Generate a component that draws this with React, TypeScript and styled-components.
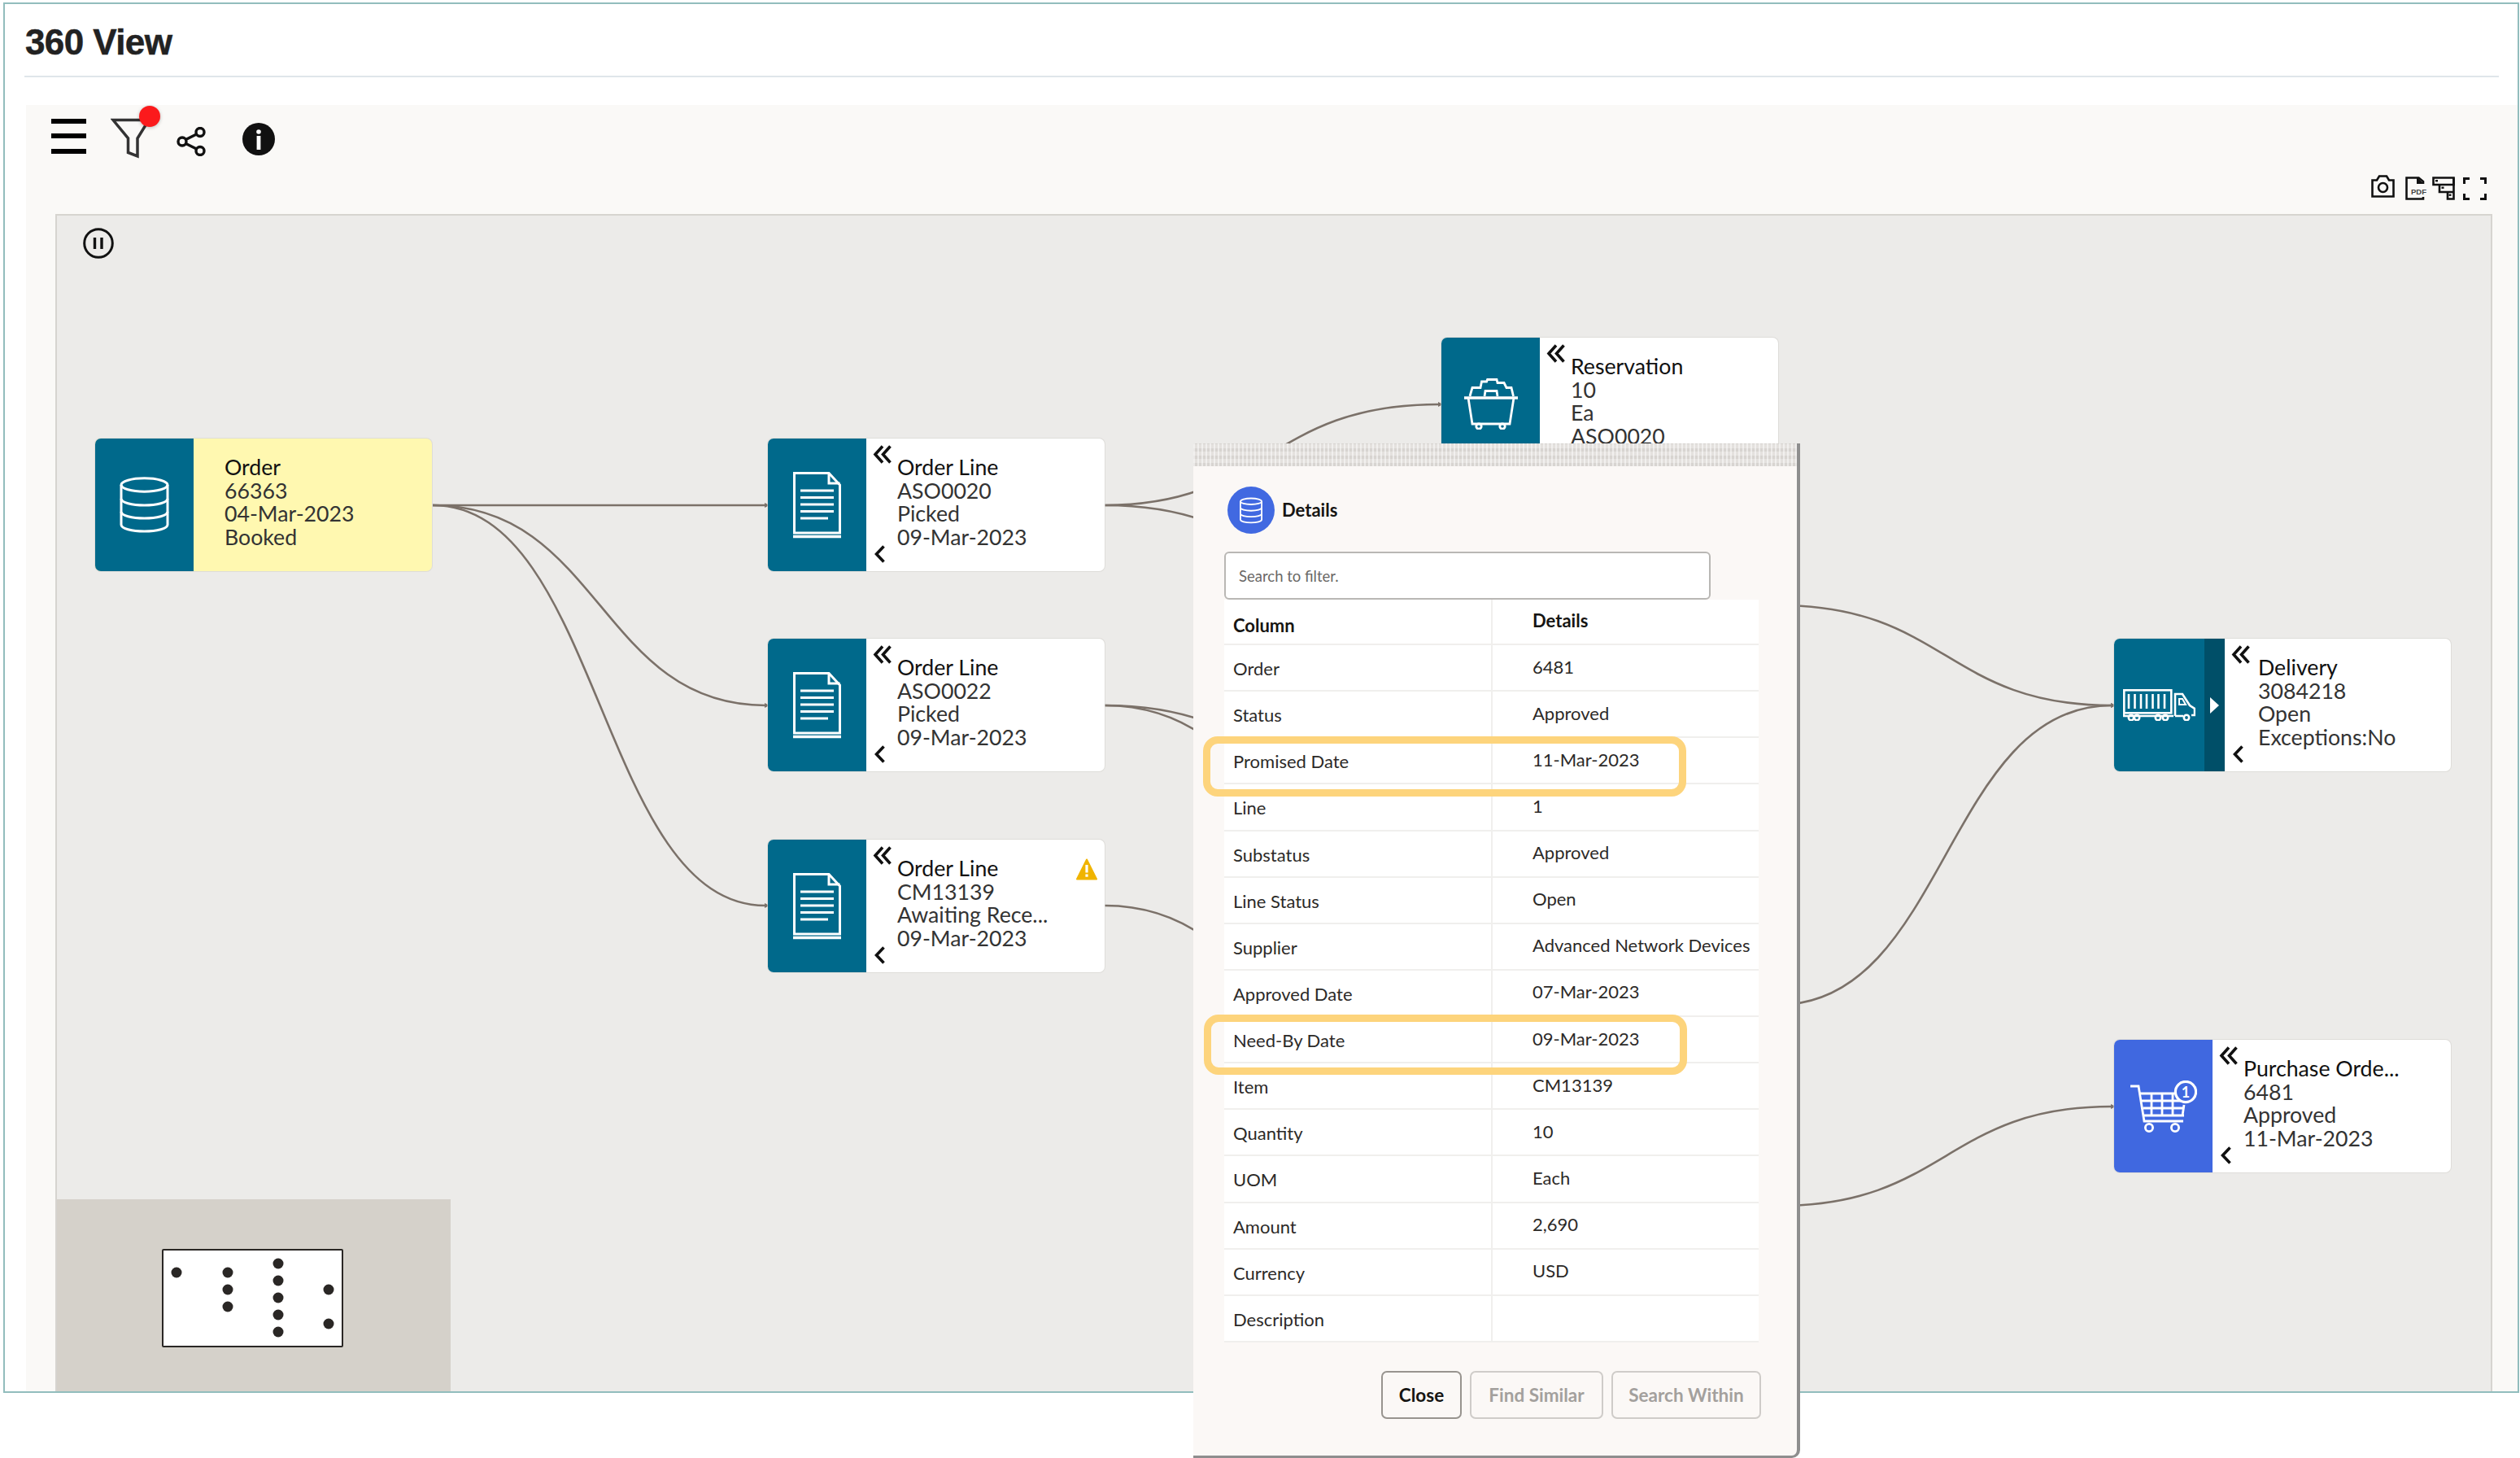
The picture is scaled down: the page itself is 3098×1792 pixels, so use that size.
import React from 'react';
import styled, { createGlobalStyle } from 'styled-components';

const GlobalStyle = createGlobalStyle`
  html, body {
    margin: 0;
    background: #fff;
  }
  * {
    box-sizing: border-box;
  }
`;

const Page = styled.div`
  position: relative;
  width: 3098px;
  height: 1792px;
  padding: 3px 0 0 4px;
  overflow: hidden;
  font-family: Lato, 'Noto Sans', sans-serif;
`;

const Frame = styled.div`
  width: 3093px;
  height: 1709px;
  border: 2px solid #92bdbd;
  display: flex;
  flex-direction: column;
`;

const TitleBar = styled.div`
  height: 90px;
  margin: 0 23px 0 24px;
  padding: 6px 0 0 1px;
  display: flex;
  align-items: center;
  border-bottom: 2px solid #dfe6ea;
`;

const Title = styled.h1`
  margin: 0;
  font-family: 'Liberation Sans', Arial, sans-serif;
  font-size: 44px;
  font-weight: 700;
  letter-spacing: -0.6px;
  color: #222;
  -webkit-text-stroke: 0.5px #222;
`;

const Panel = styled.div`
  flex: 1;
  margin: 34px 0 0 26px;
  background: #faf9f7;
  display: flex;
  flex-direction: column;
  min-height: 0;
`;

const Toolbar = styled.div`
  height: 134px;
  flex: none;
  display: flex;
  justify-content: space-between;
  align-items: flex-start;
  padding: 0 38px 0 31px;
`;

const ToolGroup = styled.div`
  display: flex;
  align-items: flex-start;
`;

const Tool = styled.div<{ $top: number; $left?: number }>`
  position: relative;
  display: flex;
  margin-top: ${({ $top }) => $top}px;
  margin-left: ${({ $left }) => $left ?? 0}px;
`;

const RedDot = styled.span`
  position: absolute;
  left: 35px;
  top: -15px;
  width: 26px;
  height: 26px;
  border-radius: 50%;
  background: #fb1a1c;
  box-shadow: 0 1px 4px rgba(0, 0, 0, 0.25);
`;

const Canvas = styled.div`
  position: relative;
  flex: 1;
  margin: 0 31px 0 36px;
  background: #ecebe9;
  border: 2px solid #d6d4d0;
  border-bottom: 0;
`;

const PauseButton = styled.div`
  position: absolute;
  left: 32px;
  top: 15px;
  display: flex;
`;

const EdgeLayer = styled.svg`
  position: absolute;
  left: 0;
  top: 0;
  width: 100%;
  height: 100%;
`;

const NodeCard = styled.div<{ $x: number; $y: number; $yellow?: boolean }>`
  position: absolute;
  left: ${({ $x }) => $x}px;
  top: ${({ $y }) => $y}px;
  width: 414px;
  height: 163px;
  display: flex;
  border-radius: 7px;
  overflow: hidden;
  background: ${({ $yellow }) => ($yellow ? '#fff8b0' : '#fff')};
  box-shadow: 0 0 0 1px rgba(214, 211, 206, 0.6);
`;

const NodeIcon = styled.div<{ $blue?: boolean; $width?: number }>`
  flex: none;
  width: ${({ $width }) => $width ?? 121}px;
  display: flex;
  align-items: center;
  justify-content: center;
  background: ${({ $blue }) => ($blue ? '#4068e0' : '#00698b')};
`;

const ExpandStrip = styled.div`
  flex: none;
  width: 25px;
  display: flex;
  align-items: center;
  justify-content: center;
  background: #004f68;
`;

const NodeBody = styled.div<{ $indent?: number }>`
  position: relative;
  flex: 1;
  padding: 21px 0 0 ${({ $indent }) => $indent ?? 38}px;
  font-size: 26.7px;
  line-height: 28.5px;
  color: #333;
`;

const NodeTitle = styled.div`
  color: #111;
`;

const NodeLine = styled.div`
  white-space: nowrap;
`;

const DoubleChevron = styled.div`
  position: absolute;
  left: 8px;
  top: 8px;
  display: flex;
`;

const SingleChevron = styled.div`
  position: absolute;
  left: 10px;
  top: 131px;
  display: flex;
`;

const WarningMark = styled.div`
  position: absolute;
  right: 9px;
  top: 23px;
  display: flex;
`;

const Minimap = styled.div`
  position: absolute;
  left: 0;
  bottom: 0;
  width: 484px;
  height: 236px;
  padding: 6px 3px 0 0;
  background: #d5d1ca;
  display: flex;
  align-items: center;
  justify-content: center;
`;

const MapView = styled.svg`
  width: 223px;
  height: 121px;
  background: #fff;
  border: 2px solid #2a2725;
  border-radius: 2px;
`;

const Modal = styled.div`
  position: absolute;
  left: 1467px;
  top: 545px;
  width: 746px;
  height: 1247px;
  background: #fbf8f6;
  border-right: 4px solid #8e8e8e;
  border-bottom: 3px solid #8e8e8e;
  border-bottom-right-radius: 10px;
  display: flex;
  flex-direction: column;
`;

const GripBar = styled.div`
  height: 28px;
  flex: none;
  background-color: #e4e1de;
  background-image:
    repeating-linear-gradient(90deg, rgba(255, 255, 255, 0.5) 0 2px, transparent 2px 5px),
    repeating-linear-gradient(0deg, rgba(150, 145, 140, 0.16) 0 4px, transparent 4px 9px);
`;

const ModalHead = styled.div`
  height: 105px;
  padding: 25px 0 0 42px;
  display: flex;
  align-items: flex-start;
  gap: 9px;
  flex: none;
`;

const HeadBadge = styled.div`
  width: 58px;
  height: 58px;
  border-radius: 50%;
  background: #4169e1;
  display: flex;
  align-items: center;
  justify-content: center;
`;

const ModalTitle = styled.div`
  height: 58px;
  line-height: 58px;
  font-size: 22px;
  font-weight: 700;
  color: #161513;
`;

const SearchBox = styled.input`
  display: block;
  flex: none;
  width: 598px;
  height: 59px;
  margin-left: 38px;
  padding: 0 16px;
  border: 2px solid #b9b7b4;
  border-radius: 6px;
  background: #fff;
  font-family: inherit;
  font-size: 18.5px;
  &::placeholder {
    color: #6a6866;
    opacity: 1;
  }
`;

const Table = styled.div`
  width: 657px;
  margin-left: 38px;
  background: #fff;
  flex: none;
`;

const Row = styled.div<{ $head?: boolean }>`
  display: grid;
  grid-template-columns: 330px 327px;
  height: ${({ $head }) => ($head ? 56 : 57.13)}px;
  border-bottom: 2px solid #f0efed;
  font-size: 22px;
  color: #2c2a28;
  font-weight: ${({ $head }) => ($head ? 700 : 400)};
`;

const KeyCell = styled.div<{ $head?: boolean }>`
  padding: ${({ $head }) => ($head ? '8px' : '2px')} 0 0 11px;
  display: flex;
  align-items: center;
  border-right: 2px solid #f0efed;
  color: ${({ $head }) => ($head ? '#161513' : '#2c2a28')};
`;

const ValueCell = styled.div<{ $head?: boolean }>`
  padding: 0 0 3px 49px;
  display: flex;
  align-items: center;
  white-space: nowrap;
  color: ${({ $head }) => ($head ? '#161513' : '#2c2a28')};
`;

const ModalFooter = styled.div`
  margin-top: 35px;
  padding-right: 44px;
  display: flex;
  justify-content: flex-end;
  gap: 10px;
`;

const FooterButton = styled.button<{ $width: number; $off?: boolean }>`
  width: ${({ $width }) => $width}px;
  height: 59px;
  padding: 0;
  border-radius: 7px;
  background: transparent;
  border: 2px solid ${({ $off }) => ($off ? '#cfccc9' : '#98948f')};
  color: ${({ $off }) => ($off ? '#a3a09d' : '#161513')};
  font-family: inherit;
  font-size: 22.5px;
  font-weight: 700;
`;

const Highlight = styled.div<{ $x: number; $y: number }>`
  position: absolute;
  left: ${({ $x }) => $x}px;
  top: ${({ $y }) => $y}px;
  width: 594px;
  height: 74px;
  border: 9px solid #fdd47c;
  border-radius: 18px;
  pointer-events: none;
`;

const MenuIcon = () => (
  <svg width="43" height="43" viewBox="0 0 43 43" fill="#000">
    <rect y="0" width="43" height="6" />
    <rect y="18" width="43" height="6" />
    <rect y="37" width="43" height="6" />
  </svg>
);

const FunnelIcon = () => (
  <svg width="49" height="50" viewBox="0 0 49 50" fill="none" stroke="#333" strokeWidth="3.5">
    <path d="M3 2.5H47L33 25V47L21.5 42.5V25Z" />
  </svg>
);

const ShareIcon = () => (
  <svg width="36" height="36" viewBox="0 0 36 36" fill="none" stroke="#111" strokeWidth="3.4">
    <circle cx="29" cy="6.5" r="5" />
    <circle cx="7" cy="18" r="5" />
    <circle cx="29" cy="29.5" r="5" />
    <path d="M11.5 15.5L24.5 9M11.5 20.5L24.5 27" />
  </svg>
);

const InfoIcon = () => (
  <svg width="40" height="40" viewBox="0 0 40 40">
    <circle cx="20" cy="20" r="20" fill="#111" />
    <circle cx="20" cy="11" r="2.8" fill="#fff" />
    <rect x="17.6" y="16" width="4.8" height="17" fill="#fff" />
  </svg>
);

const PauseIcon = () => (
  <svg width="38" height="38" viewBox="0 0 38 38" fill="none" stroke="#111">
    <circle cx="19" cy="19" r="17.3" strokeWidth="3" />
    <path d="M14.5 12V26M23 12V26" strokeWidth="3.4" />
  </svg>
);

const CameraIcon = () => (
  <svg width="29" height="28" viewBox="0 0 29 28" fill="none" stroke="#111" strokeWidth="2.6">
    <path d="M1.5 26.5V6.5H7L10 1.5H19L22 6.5H27.5V26.5Z" />
    <circle cx="14.5" cy="15.5" r="5.5" />
  </svg>
);

const PdfIcon = () => (
  <svg width="27" height="29" viewBox="0 0 27 29" fill="none" stroke="#111" strokeWidth="2.6">
    <path d="M22 9V6L16.5 1.5H1.5V27.5H22V25" />
    <path d="M15 1.5V8H22" strokeWidth="2" fill="#111" />
    <text x="7" y="21.5" fontFamily="'Liberation Sans', sans-serif" fontSize="9.5" fontWeight="700" fill="#444" stroke="none">
      PDF
    </text>
  </svg>
);

const TreeIcon = () => (
  <svg width="28" height="29" viewBox="0 0 28 29" fill="none" stroke="#111" strokeWidth="2.6">
    <path d="M1.5 1.5H26.5V10H1.5Z" />
    <path d="M9 10V19H26.5M19 19V27.5H26.5V1.5" />
    <rect x="4" y="4" width="3" height="2.4" fill="#111" stroke="none" />
    <rect x="11.5" y="12.5" width="3" height="2.4" fill="#111" stroke="none" />
    <rect x="20.5" y="21.5" width="3" height="2.4" fill="#111" stroke="none" />
  </svg>
);

const FullscreenIcon = () => (
  <svg width="29" height="28" viewBox="0 0 29 28" fill="none" stroke="#111" strokeWidth="3">
    <path d="M1.5 8V1.5H8M21 1.5H27.5V8M27.5 20V26.5H21M8 26.5H1.5V20" />
  </svg>
);

const DatabaseIcon = ({ width = 61, height = 69, weight = 3 }: { width?: number; height?: number; weight?: number }) => (
  <svg width={width} height={height} viewBox="0 0 61 69" fill="none" stroke="#fff" strokeWidth={(weight * 61) / width}>
    <ellipse cx="30.5" cy="10" rx="28.5" ry="8.2" />
    <path d="M2 10V59C2 63.5 15 67 30.5 67S59 63.5 59 59V10" />
    <path d="M2 27C2 31.5 15 35 30.5 35S59 31.5 59 27" />
    <path d="M2 43C2 47.5 15 51 30.5 51S59 47.5 59 43" />
  </svg>
);

const DocumentIcon = () => (
  <svg width="59" height="82" viewBox="0 0 59 82" fill="none" stroke="#fff" strokeWidth="3">
    <path d="M1.5 1.5H44L57.5 16V75H1.5Z" />
    <path d="M44 1.5V14H57.5" />
    <path d="M9 23H50M9 31.5H50M9 40H50M9 48.5H50M9 57H43" />
    <path d="M0 79.5H59" strokeWidth="3.4" />
  </svg>
);

const BasketIcon = () => (
  <svg width="66" height="63" viewBox="0 0 66 63" fill="none" stroke="#fff" strokeWidth="2.8">
    <path d="M0 24H66" strokeWidth="3.4" />
    <path d="M5 24L10 56H56L61 24" />
    <circle cx="18" cy="59" r="3.2" />
    <circle cx="47" cy="59" r="3.2" />
    <path d="M7 22L10 11.5H20L21.5 4H27.6L28.6 1.5H40L41 5.5H49L52 11.5H58L60.5 22" />
    <path d="M25 22L26 15.5H40L41 22" />
  </svg>
);

const TruckIcon = () => (
  <svg width="89" height="39" viewBox="0 0 89 39" fill="none" stroke="#fff" strokeWidth="2.6">
    <rect x="1.3" y="1.3" width="58" height="28" />
    <path d="M7 6V24M14.5 6V24M22 6V24M29 6V24M36.5 6V24M43.5 6V24M51 6V24" />
    <path d="M1 30V33H62M64 33V6H73L82 20L88 24V32H84M74 33H64" />
    <path d="M69 12H73L77 19H69Z" strokeWidth="2" />
    <circle cx="10" cy="35" r="3.2" />
    <circle cx="17" cy="35" r="3.2" />
    <circle cx="43" cy="35" r="3.2" />
    <circle cx="52" cy="35" r="3.2" />
    <circle cx="78" cy="35" r="3.2" />
  </svg>
);

const CartIcon = () => (
  <svg width="82" height="64" viewBox="0 0 82 64" fill="none" stroke="#fff" strokeWidth="2.8">
    <path d="M0 7H10L17 50H65" />
    <path d="M12 16H54M14 25H66M15.5 34H66M16 43H66M66 30L64 43" />
    <path d="M26 16V43M39 16V43M52 16V43" />
    <circle cx="23" cy="58" r="4.6" />
    <circle cx="55" cy="58" r="4.6" />
    <circle cx="68" cy="14" r="12.6" fill="#4068e0" strokeWidth="3.2" />
    <text x="68" y="20.5" textAnchor="middle" fontFamily="Lato, sans-serif" fontSize="18" fontWeight="700" fill="#fff" stroke="none">
      1
    </text>
  </svg>
);

const ChevronsLeft = () => (
  <svg width="23" height="23" viewBox="0 0 23 23" fill="none" stroke="#111" strokeWidth="3.6">
    <path d="M12 1.5L3 11.5L12 21.5M21.5 1.5L12.5 11.5L21.5 21.5" />
  </svg>
);

const ChevronLeft = () => (
  <svg width="13" height="22" viewBox="0 0 13 22" fill="none" stroke="#111" strokeWidth="3.6">
    <path d="M11.5 1.5L2.5 11L11.5 20.5" />
  </svg>
);

const WarningIcon = () => (
  <svg width="26" height="27" viewBox="0 0 26 27">
    <path d="M13 1.5L25 25.5H1Z" fill="#f0b400" stroke="#f0b400" strokeWidth="2" strokeLinejoin="round" />
    <rect x="11.4" y="8" width="3.2" height="9.5" fill="#fff" />
    <rect x="11.4" y="19.5" width="3.2" height="3.2" fill="#fff" />
  </svg>
);

type NodeData = {
  x: number;
  y: number;
  icon: React.ReactNode;
  lines: string[];
  yellow?: boolean;
  blue?: boolean;
  boxWidth?: number;
  indent?: number;
  expandable?: boolean;
  warning?: boolean;
  plain?: boolean;
};

// positions are relative to the canvas, this is a free diagram
const nodes: NodeData[] = [
  { x: 47, y: 274, icon: <DatabaseIcon />, lines: ['Order', '66363', '04-Mar-2023', 'Booked'], yellow: true, plain: true },
  { x: 874, y: 274, icon: <DocumentIcon />, lines: ['Order Line', 'ASO0020', 'Picked', '09-Mar-2023'] },
  { x: 874, y: 520, icon: <DocumentIcon />, lines: ['Order Line', 'ASO0022', 'Picked', '09-Mar-2023'] },
  { x: 874, y: 767, icon: <DocumentIcon />, lines: ['Order Line', 'CM13139', 'Awaiting Rece...', '09-Mar-2023'], warning: true },
  { x: 1702, y: 150, icon: <BasketIcon />, lines: ['Reservation', '10', 'Ea', 'ASO0020'] },
  { x: 2529, y: 520, icon: <TruckIcon />, lines: ['Delivery', '3084218', 'Open', 'Exceptions:No'], boxWidth: 111, indent: 41, expandable: true },
  { x: 2529, y: 1013, icon: <CartIcon />, lines: ['Purchase Orde...', '6481', 'Approved', '11-Mar-2023'], blue: true },
];

const edges = [
  'M532 621H941',
  'M532 621C738 621 738 867 941 867',
  'M532 621C738 621 738 1113 941 1113',
  'M1358 621C1558 621 1558 497 1769 497',
  'M1358 621C1565 621 1565 744 1772 744',
  'M1358 867C1565 867 1565 991 1772 991',
  'M1358 867C1565 867 1565 1110 1772 1110',
  'M1358 1113C1565 1113 1565 1360 1772 1360',
  'M2186 744C2392 744 2392 867 2596 867',
  'M2186 1235C2392 1235 2392 867 2596 867',
  'M2186 1482C2392 1482 2392 1360 2596 1360',
];

const mapDots = [
  [16, 27],
  [79, 27],
  [79, 48],
  [79, 69],
  [141, 16],
  [141, 37],
  [141, 58],
  [141, 79],
  [141, 100],
  [203, 48],
  [203, 90],
];

const detailRows = [
  ['Order', '6481'],
  ['Status', 'Approved'],
  ['Promised Date', '11-Mar-2023'],
  ['Line', '1'],
  ['Substatus', 'Approved'],
  ['Line Status', 'Open'],
  ['Supplier', 'Advanced Network Devices'],
  ['Approved Date', '07-Mar-2023'],
  ['Need-By Date', '09-Mar-2023'],
  ['Item', 'CM13139'],
  ['Quantity', '10'],
  ['UOM', 'Each'],
  ['Amount', '2,690'],
  ['Currency', 'USD'],
  ['Description', ''],
];

const Node = ({ x, y, icon, lines, yellow, blue, boxWidth, indent, expandable, warning, plain }: NodeData) => (
  <NodeCard $x={x} $y={y} $yellow={yellow}>
    <NodeIcon $blue={blue} $width={boxWidth}>
      {icon}
    </NodeIcon>
    {expandable && (
      <ExpandStrip>
        <svg width="11" height="20" viewBox="0 0 11 20" fill="#fff">
          <path d="M0 0L11 10L0 20Z" />
        </svg>
      </ExpandStrip>
    )}
    <NodeBody $indent={indent}>
      {!plain && (
        <DoubleChevron>
          <ChevronsLeft />
        </DoubleChevron>
      )}
      {lines.map((line, i) =>
        i === 0 ? <NodeTitle key={line}>{line}</NodeTitle> : <NodeLine key={line}>{line}</NodeLine>
      )}
      {warning && (
        <WarningMark>
          <WarningIcon />
        </WarningMark>
      )}
      {!plain && (
        <SingleChevron>
          <ChevronLeft />
        </SingleChevron>
      )}
    </NodeBody>
  </NodeCard>
);

export default function App() {
  return (
    <Page>
      <GlobalStyle />
      <Frame>
        <TitleBar>
          <Title>360 View</Title>
        </TitleBar>
        <Panel>
          <Toolbar>
            <ToolGroup>
              <Tool $top={17}>
                <MenuIcon />
              </Tool>
              <Tool $top={16} $left={30}>
                <FunnelIcon />
                <RedDot />
              </Tool>
              <Tool $top={27} $left={32}>
                <ShareIcon />
              </Tool>
              <Tool $top={22} $left={45}>
                <InfoIcon />
              </Tool>
            </ToolGroup>
            <ToolGroup>
              <Tool $top={86}>
                <CameraIcon />
              </Tool>
              <Tool $top={88} $left={13}>
                <PdfIcon />
              </Tool>
              <Tool $top={88} $left={6}>
                <TreeIcon />
              </Tool>
              <Tool $top={89} $left={10}>
                <FullscreenIcon />
              </Tool>
            </ToolGroup>
          </Toolbar>
          <Canvas>
            <EdgeLayer fill="none" stroke="#7b7169" strokeWidth="2.6">
              <defs>
                <marker id="edge-arrow" markerUnits="userSpaceOnUse" markerWidth="6" markerHeight="6" refX="1" refY="3" orient="auto">
                  <path d="M0 0L6 3L0 6Z" fill="#7b7169" stroke="none" />
                </marker>
              </defs>
              <g transform="translate(-70 -265)">
                {edges.map((d) => (
                  <path key={d} d={d} markerEnd="url(#edge-arrow)" />
                ))}
              </g>
            </EdgeLayer>
            <PauseButton>
              <PauseIcon />
            </PauseButton>
            {nodes.map((node) => (
              <Node key={`${node.x}-${node.y}`} {...node} />
            ))}
            <Minimap>
              <MapView viewBox="0 0 219 117">
                {mapDots.map(([cx, cy]) => (
                  <circle key={`${cx}-${cy}`} cx={cx} cy={cy} r="6.5" fill="#2a2725" />
                ))}
              </MapView>
            </Minimap>
          </Canvas>
        </Panel>
      </Frame>
      <Modal>
        <GripBar />
        <ModalHead>
          <HeadBadge>
            <DatabaseIcon width={28} height={33} weight={1.8} />
          </HeadBadge>
          <ModalTitle>Details</ModalTitle>
        </ModalHead>
        <SearchBox placeholder="Search to filter." />
        <Table>
          <Row $head>
            <KeyCell $head>Column</KeyCell>
            <ValueCell $head>Details</ValueCell>
          </Row>
          {detailRows.map(([label, value]) => (
            <Row key={label}>
              <KeyCell>{label}</KeyCell>
              <ValueCell>{value}</ValueCell>
            </Row>
          ))}
        </Table>
        <ModalFooter>
          <FooterButton $width={99}>Close</FooterButton>
          <FooterButton $width={164} $off>
            Find Similar
          </FooterButton>
          <FooterButton $width={184} $off>
            Search Within
          </FooterButton>
        </ModalFooter>
        <Highlight $x={12} $y={360} />
        <Highlight $x={13} $y={702} />
      </Modal>
    </Page>
  );
}
